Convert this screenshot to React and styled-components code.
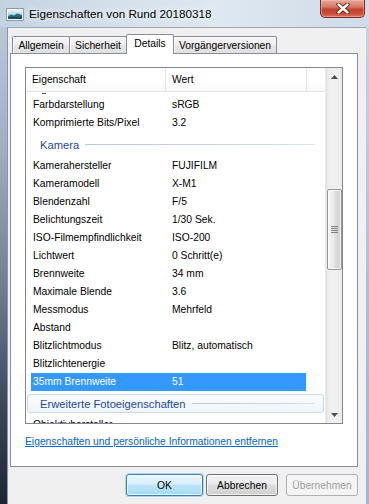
import React from 'react';
import styled, { createGlobalStyle } from 'styled-components';

const GlobalStyle = createGlobalStyle`
  html, body { margin: 0; padding: 0; width: 369px; height: 504px; overflow: hidden; }
  body { font-family: "Liberation Sans", Arial, sans-serif; }
  * { box-sizing: border-box; }
`;

const Window = styled.div`
  width: 369px;
  height: 504px;
  display: flex;
  flex-direction: column;
  background: #c8d6e5;
`;

const TitleBar = styled.div`
  height: 27px;
  display: flex;
  align-items: flex-start;
  background: linear-gradient(to right, #c3d2e2 0%, #d6e1ec 35%, #dfe8f1 60%, #cfdbe8 100%);
`;

const TitleIcon = styled.svg`
  margin: 8px 0 0 6px;
  flex: none;
`;

const TitleText = styled.div`
  margin-left: 5px;
  line-height: 27px;
  font-size: 11.7px;
  color: #000;
  text-shadow: 0 0 6px #f4f8fc, 0 0 10px #f4f8fc;
  white-space: nowrap;
`;

const CloseButton = styled.div`
  margin-left: auto;
  margin-right: 4px;
  width: 45px;
  height: 18px;
  border: 1px solid #7f2a1c;
  border-top: none;
  border-radius: 0 0 5px 5px;
  background: linear-gradient(to bottom, #e9a797 0%, #d77a66 40%, #c2432c 55%, #c94d36 80%, #d9735d 100%);
  box-shadow: inset 0 0 0 1px rgba(255, 200, 190, 0.45);
  display: flex;
  align-items: center;
  justify-content: center;
`;

const FrameRow = styled.div`
  flex: 1;
  display: flex;
  min-height: 0;
`;

const SideFrame = styled.div`
  width: ${(p) => p.w}px;
  flex: none;
  background: ${(p) => p.bg};
`;

const Client = styled.div`
  flex: 1;
  display: flex;
  flex-direction: column;
  background: #f0f0f0;
  border-left: 1px solid #8796a8;
  border-top: 1px solid #9aa8b8;
  padding: 6px 8px 0 2px;
`;

const TabStrip = styled.div`
  height: 19px;
  display: flex;
  align-items: flex-end;
  padding-left: 2px;
  position: relative;
  z-index: 1;
`;

const Tab = styled.div`
  width: ${(p) => p.w}px;
  height: ${(p) => (p.active ? 20 : 17)}px;
  margin-left: ${(p) => (p.first ? 0 : -1)}px;
  margin-bottom: ${(p) => (p.active ? -1 : 0)}px;
  border: 1px solid #898c95;
  border-bottom: none;
  border-radius: 2px 2px 0 0;
  background: ${(p) =>
    p.active ? '#ffffff' : 'linear-gradient(to bottom, #f6f6f6 0%, #efefef 50%, #e6e6e6 51%, #e0e0e0 100%)'};
  box-shadow: ${(p) => (p.active ? 'none' : 'inset 0 1px 0 #ffffff, inset 1px 0 0 #fbfbfb')};
  font-size: 10.3px;
  color: #000;
  display: flex;
  justify-content: center;
  align-items: ${(p) => (p.active ? 'flex-start' : 'center')};
  padding-top: ${(p) => (p.active ? 3 : 0)}px;
  white-space: nowrap;
  position: relative;
  z-index: ${(p) => (p.active ? 2 : 1)};
`;

const Panel = styled.div`
  flex: 1;
  border: 1px solid #898c95;
  background: #ffffff;
  padding: 13px 0 0 14px;
  display: flex;
  flex-direction: column;
`;

const ListView = styled.div`
  width: 318px;
  height: 357px;
  border: 1px solid #828790;
  display: flex;
  background: #fff;
`;

const ListMain = styled.div`
  flex: 1;
  display: flex;
  flex-direction: column;
  min-width: 0;
`;

const Header = styled.div`
  height: 24px;
  flex: none;
  display: flex;
  border-bottom: 1px solid #e5e5e5;
  background: linear-gradient(to bottom, #ffffff 0%, #ffffff 60%, #f7f8fa 100%);
`;

const HeaderCell = styled.div`
  width: ${(p) => p.w}px;
  flex: ${(p) => (p.grow ? 1 : 'none')};
  border-right: ${(p) => (p.grow ? 'none' : '1px solid #e5e5e5')};
  padding-left: 6px;
  font-size: 10.3px;
  line-height: 23px;
  color: #000;
  white-space: nowrap;
`;

const Body = styled.div`
  flex: 1;
  overflow: hidden;
  display: flex;
  flex-direction: column;
`;

const ClippedRow = styled.div`
  height: 4px;
  flex: none;
  position: relative;
  &::before {
    content: '';
    position: absolute;
    left: 16px;
    top: 1px;
    width: 4px;
    height: 1px;
    background: #555;
  }
`;

const Row = styled.div`
  height: 18px;
  flex: none;
  width: 275px;
  margin-left: 5px;
  padding-left: 2px;
  display: grid;
  grid-template-columns: 139px 1fr;
  font-size: 10.3px;
  line-height: 18px;
  white-space: nowrap;
  color: ${(p) => (p.selected ? '#ffffff' : '#000000')};
  background: ${(p) => (p.selected ? '#3399ff' : 'transparent')};
`;

const Group = styled.div`
  height: ${(p) => (p.boxed ? 19 : 25)}px;
  flex: none;
  margin: ${(p) => (p.boxed ? '3px 0 3px 1px' : '0 0 0 1px')};
  width: 297px;
  display: flex;
  align-items: center;
  padding-left: 12px;
  padding-right: 8px;
  border: 1px solid ${(p) => (p.boxed ? '#c5d9ee' : 'transparent')};
  border-radius: 3px;
  background: ${(p) => (p.boxed ? 'linear-gradient(to bottom, #fbfdff 0%, #eef5fc 100%)' : 'transparent')};
`;

const GroupLabel = styled.span`
  font-size: 11.2px;
  color: #23479c;
  white-space: nowrap;
`;

const GroupLine = styled.div`
  flex: 1;
  height: 1px;
  margin-left: 6px;
  background: linear-gradient(to right, #b9c9dc 0%, #ccd8e6 80%, #dde6f0 100%);
`;

const ScrollBar = styled.div`
  width: 17px;
  flex: none;
  display: flex;
  flex-direction: column;
  background: linear-gradient(to right, #e3e3e3 0%, #eeeeee 20%, #f0f0f0 60%, #ececec 100%);
  border-left: 1px solid #e8e8e8;
`;

const ArrowButton = styled.div`
  height: 17px;
  flex: none;
  display: flex;
  align-items: center;
  justify-content: center;
`;

const Track = styled.div`
  flex: 1;
  display: flex;
  flex-direction: column;
  align-items: center;
`;

const Thumb = styled.div`
  width: 15px;
  height: ${(p) => p.h}px;
  margin-top: ${(p) => p.offset}px;
  border: 1px solid #979797;
  border-radius: 2px;
  background: linear-gradient(to right, #f4f4f4 0%, #eaeaea 45%, #dcdcdc 55%, #d2d2d2 100%);
  box-shadow: inset 0 0 0 1px rgba(255, 255, 255, 0.7);
  display: flex;
  align-items: center;
  justify-content: center;
`;

const Link = styled.a`
  margin-top: 11px;
  font-size: 10.3px;
  line-height: 14px;
  color: #0066cc;
  text-decoration: underline;
  white-space: nowrap;
  cursor: pointer;
`;

const ButtonRow = styled.div`
  height: 37px;
  flex: none;
  display: flex;
  justify-content: flex-end;
  align-items: flex-start;
  gap: 8px;
  padding-top: 7px;
`;

const Button = styled.div`
  width: ${(p) => p.w || 72}px;
  height: 22px;
  margin-right: ${(p) => (p.primary ? -5 : 0)}px;
  border-radius: 3px;
  font-size: 10.3px;
  display: flex;
  align-items: center;
  justify-content: center;
  white-space: nowrap;
  border: 1px solid ${(p) => (p.primary ? '#3c7fb1' : p.disabled ? '#adb2b5' : '#707070')};
  color: ${(p) => (p.disabled ? '#a0a0a0' : '#000')};
  background: ${(p) =>
    p.primary
      ? 'linear-gradient(to bottom, #eaf6fd 0%, #d9f0fc 45%, #bee6fd 50%, #a7d9f5 100%)'
      : p.disabled
      ? '#f4f4f4'
      : 'linear-gradient(to bottom, #f2f2f2 0%, #ebebeb 45%, #dddddd 50%, #cfcfcf 100%)'};
  box-shadow: ${(p) =>
    p.primary ? '0 0 0 1px #a8dcf7, inset 0 0 0 1px rgba(255,255,255,0.8)' : p.disabled ? 'none' : 'inset 0 0 0 1px rgba(255,255,255,0.7)'};
`;

const rowsTop = [
  ['Farbdarstellung', 'sRGB'],
  ['Komprimierte Bits/Pixel', '3.2'],
];

const cameraRows = [
  ['Kamerahersteller', 'FUJIFILM'],
  ['Kameramodell', 'X-M1'],
  ['Blendenzahl', 'F/5'],
  ['Belichtungszeit', '1/30 Sek.'],
  ['ISO-Filmempfindlichkeit', 'ISO-200'],
  ['Lichtwert', '0 Schritt(e)'],
  ['Brennweite', '34 mm'],
  ['Maximale Blende', '3.6'],
  ['Messmodus', 'Mehrfeld'],
  ['Abstand', ''],
  ['Blitzlichtmodus', 'Blitz, automatisch'],
  ['Blitzlichtenergie', ''],
];

const PictureIcon = () => (
  <TitleIcon width="18" height="13" viewBox="0 0 18 13">
    <defs>
      <linearGradient id="sky" x1="0" y1="0" x2="0" y2="1">
        <stop offset="0" stopColor="#e8f3f8" />
        <stop offset="1" stopColor="#7fc0d6" />
      </linearGradient>
    </defs>
    <rect x="0.5" y="0.5" width="17" height="12" fill="#f4f6f8" stroke="#8d9aa8" />
    <rect x="2" y="2" width="14" height="9" fill="url(#sky)" />
    <path d="M2 8 L5 6.5 L8 7.5 L11 5.5 L16 7 L16 11 L2 11 Z" fill="#2e6b7a" />
    <path d="M2 9.5 L7 8.5 L12 9 L16 8.5 L16 11 L2 11 Z" fill="#1f4a58" />
  </TitleIcon>
);

const CloseGlyph = () => (
  <svg width="14" height="11" viewBox="0 0 14 11">
    <path d="M2.5 1.5 L11.5 9.5 M11.5 1.5 L2.5 9.5" stroke="#5a1a10" strokeWidth="4.2" strokeLinecap="round" />
    <path d="M2.5 1.5 L11.5 9.5 M11.5 1.5 L2.5 9.5" stroke="#ffffff" strokeWidth="2.4" strokeLinecap="round" />
  </svg>
);

const Arrow = ({ up }) => (
  <svg width="7" height="4" viewBox="0 0 7 4">
    <path d={up ? 'M0 4 L3.5 0 L7 4 Z' : 'M0 0 L7 0 L3.5 4 Z'} fill="#4d4d4d" />
  </svg>
);

const Grip = () => (
  <svg width="7" height="7" viewBox="0 0 7 7">
    <path d="M0 0.5 H7 M0 2.5 H7 M0 4.5 H7 M0 6.5 H7" stroke="#7f7f7f" strokeWidth="1" />
  </svg>
);

export default function App() {
  return (
    <>
      <GlobalStyle />
      <Window>
        <TitleBar>
          <PictureIcon />
          <TitleText>Eigenschaften von Rund 20180318</TitleText>
          <CloseButton>
            <CloseGlyph />
          </CloseButton>
        </TitleBar>
        <FrameRow>
          <SideFrame w={7} bg="linear-gradient(to bottom, #b9c8d9 0%, #9fb0c4 25%, #6d7d92 55%, #3a4658 80%, #1d2533 100%)" />
          <Client>
            <TabStrip>
              <Tab w={58} first>Allgemein</Tab>
              <Tab w={58}>Sicherheit</Tab>
              <Tab w={48} active>Details</Tab>
              <Tab w={104}>Vorgängerversionen</Tab>
            </TabStrip>
            <Panel>
              <ListView>
                <ListMain>
                  <Header>
                    <HeaderCell w={140}>Eigenschaft</HeaderCell>
                    <HeaderCell w={141}>Wert</HeaderCell>
                    <HeaderCell grow />
                  </Header>
                  <Body>
                    <ClippedRow />
                    {rowsTop.map(([k, v]) => (
                      <Row key={k}>
                        <span>{k}</span>
                        <span>{v}</span>
                      </Row>
                    ))}
                    <Group>
                      <GroupLabel>Kamera</GroupLabel>
                      <GroupLine />
                    </Group>
                    {cameraRows.map(([k, v]) => (
                      <Row key={k}>
                        <span>{k}</span>
                        <span>{v}</span>
                      </Row>
                    ))}
                    <Row selected>
                      <span>35mm Brennweite</span>
                      <span>51</span>
                    </Row>
                    <Group boxed>
                      <GroupLabel>Erweiterte Fotoeigenschaften</GroupLabel>
                      <GroupLine />
                    </Group>
                    <Row>
                      <span>Objektivhersteller</span>
                      <span></span>
                    </Row>
                  </Body>
                </ListMain>
                <ScrollBar>
                  <ArrowButton>
                    <Arrow up />
                  </ArrowButton>
                  <Track>
                    <Thumb offset={104} h={81}>
                      <Grip />
                    </Thumb>
                  </Track>
                  <ArrowButton>
                    <Arrow />
                  </ArrowButton>
                </ScrollBar>
              </ListView>
              <Link>Eigenschaften und persönliche Informationen entfernen</Link>
            </Panel>
            <ButtonRow>
              <Button primary w={77}>OK</Button>
              <Button>Abbrechen</Button>
              <Button disabled>Übernehmen</Button>
            </ButtonRow>
          </Client>
          <SideFrame w={3} bg="linear-gradient(to bottom, #c4d3e3 0%, #a9bfd8 60%, #9db7d4 100%)" />
        </FrameRow>
      </Window>
    </>
  );
}
